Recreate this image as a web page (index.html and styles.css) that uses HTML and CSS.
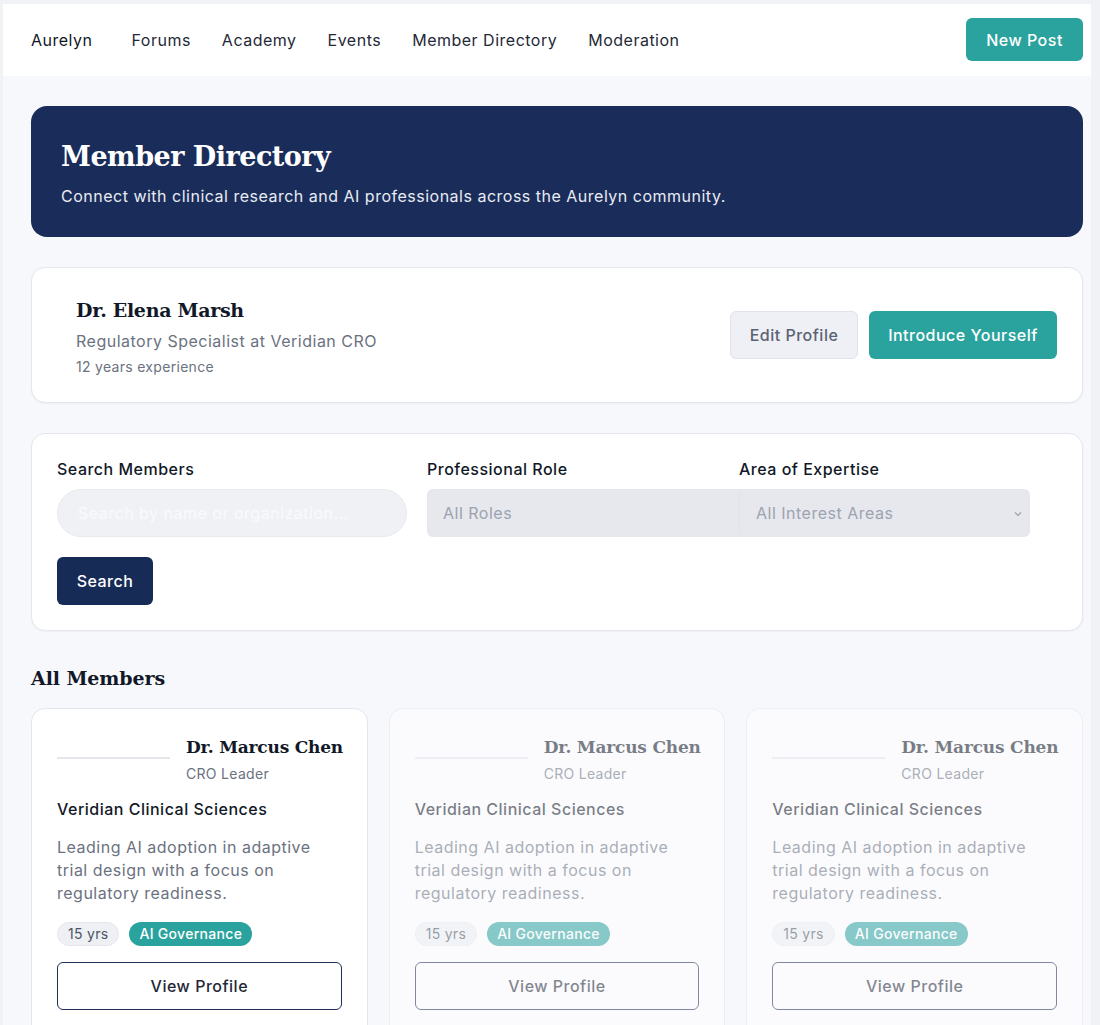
FILE: index.html
```html
<!DOCTYPE html>
<html lang="en">
<head>
<meta charset="utf-8">
<title>Member Directory – Aurelyn</title>
<link rel="stylesheet" href="styles.css">
</head>
<body>
<div class="page">
  <header class="topbar">
    <nav class="nav">
      <a class="brand" href="#">Aurelyn</a>
      <a href="#">Forums</a>
      <a href="#">Academy</a>
      <a href="#">Events</a>
      <a href="#">Member Directory</a>
      <a href="#">Moderation</a>
    </nav>
    <button class="btn btn-teal btn-new">New Post</button>
  </header>

  <main class="content">
    <section class="hero">
      <h1>Member Directory</h1>
      <p>Connect with clinical research and AI professionals across the Aurelyn community.</p>
    </section>

    <section class="card me">
      <div class="me-info">
        <h2>Dr. Elena Marsh</h2>
        <p class="me-role">Regulatory Specialist at Veridian CRO</p>
        <p class="me-exp">12 years experience</p>
      </div>
      <div class="me-actions">
        <button class="btn btn-light">Edit Profile</button>
        <button class="btn btn-teal">Introduce Yourself</button>
      </div>
    </section>

    <section class="card filters">
      <div class="filter-row">
        <label class="field f-search">
          <span>Search Members</span>
          <input type="text" placeholder="Search by name or organization...">
        </label>
        <label class="field f-role">
          <span>Professional Role</span>
          <div class="select select-role">All Roles</div>
        </label>
        <label class="field f-area">
          <span>Area of Expertise</span>
          <div class="select select-area">All Interest Areas
            <svg class="chev" width="8" height="6" viewBox="0 0 8 6"><path d="M1 1.5 L4 4.5 L7 1.5" fill="none" stroke="#9aa0ab" stroke-width="1.2"/></svg>
          </div>
        </label>
      </div>
      <button class="btn btn-navy">Search</button>
    </section>

    <h2 class="section-title">All Members</h2>

    <div class="grid">
      <article class="member">
        <div class="m-head">
          <div class="avatar"></div>
          <div class="m-name">
            <h3>Dr. Marcus Chen</h3>
            <p>CRO Leader</p>
          </div>
        </div>
        <p class="m-org">Veridian Clinical Sciences</p>
        <p class="m-bio">Leading AI adoption in adaptive trial design with a focus on regulatory readiness.</p>
        <div class="tags"><span class="tag tag-grey">15 yrs</span><span class="tag tag-teal">AI Governance</span></div>
        <button class="btn btn-outline">View Profile</button>
      </article>
      <article class="member faded">
        <div class="m-head">
          <div class="avatar"></div>
          <div class="m-name">
            <h3>Dr. Marcus Chen</h3>
            <p>CRO Leader</p>
          </div>
        </div>
        <p class="m-org">Veridian Clinical Sciences</p>
        <p class="m-bio">Leading AI adoption in adaptive trial design with a focus on regulatory readiness.</p>
        <div class="tags"><span class="tag tag-grey">15 yrs</span><span class="tag tag-teal">AI Governance</span></div>
        <button class="btn btn-outline">View Profile</button>
      </article>
      <article class="member faded">
        <div class="m-head">
          <div class="avatar"></div>
          <div class="m-name">
            <h3>Dr. Marcus Chen</h3>
            <p>CRO Leader</p>
          </div>
        </div>
        <p class="m-org">Veridian Clinical Sciences</p>
        <p class="m-bio">Leading AI adoption in adaptive trial design with a focus on regulatory readiness.</p>
        <div class="tags"><span class="tag tag-grey">15 yrs</span><span class="tag tag-teal">AI Governance</span></div>
        <button class="btn btn-outline">View Profile</button>
      </article>
    </div>
  </main>
</div>
</body>
</html>
```

FILE: styles.css
```css
* { box-sizing: border-box; }
html { background: #f1f2f5; }
body {
  margin: 0;
  font-family: Inter, "Noto Sans", sans-serif;
  letter-spacing: 0.5px;
  color: #111827;
  overflow: hidden;
}
.page {
  width: 1088px;
  margin: 4px 0 0 3px;
  background: #f7f8fc;
  min-height: 1021px;
}
.topbar {
  height: 72px;
  background: #ffffff;
  display: flex;
  align-items: center;
  justify-content: space-between;
  padding: 0 8px 0 28px;
}
.nav { display: flex; align-items: center; gap: 31px; }
.nav a {
  color: #1f2937;
  text-decoration: none;
  font-size: 16px;
}
.nav .brand { margin-right: 8px; color: #111827; }
.btn {
  font-family: Inter, "Noto Sans", sans-serif;
  font-size: 16px;
  font-weight: 500;
  letter-spacing: 0.5px;
  border-radius: 6px;
  border: none;
  cursor: pointer;
}
.btn-teal { background: #2aa39e; color: #fff; }
.btn-new { height: 43px; width: 117px; margin-top: -1px; }
.content {
  width: 1052px;
  margin-left: 28px;
  padding: 30px 0 0;
}
.hero {
  background: #1a2d5a;
  border-radius: 16px;
  height: 131px;
  padding: 34px 30px 0;
  color: #fff;
}
.hero h1 {
  margin: 0;
  font-family: "DejaVu Serif", "Liberation Serif", serif;
  font-size: 27px;
  font-weight: 700;
  letter-spacing: -0.5px;
  line-height: 34px;
}
.hero p { margin: 12px 0 0; font-size: 16px; color: #e8ebf3; }
.card {
  background: #fff;
  border: 1px solid #e3e6ec;
  border-radius: 14px;
  box-shadow: 0 1px 2px rgba(0,0,0,0.04);
}
.me {
  margin-top: 30px;
  height: 136px;
  display: flex;
  align-items: center;
  justify-content: space-between;
  padding: 2px 25px 0 44px;
}
.me h2 {
  margin: 0;
  font-family: "DejaVu Serif", "Liberation Serif", serif;
  font-size: 19px;
  font-weight: 700;
  letter-spacing: -0.3px;
  line-height: 26px;
  color: #111827;
}
.me-role { margin: 8px 0 0; font-size: 16px; color: #6b7280; }
.me-exp { margin: 7px 0 0; font-size: 14px; letter-spacing: 0.3px; color: #6b7280; }
.me-actions { display: flex; gap: 11px; margin-top: -2px; }
.me-actions .btn { height: 48px; padding: 0; }
.btn-light { background: #eef0f5; color: #5b6271; border: 1px solid #dfe2e8; width: 128px; }
.me-actions .btn-teal { width: 188px; }
.filters {
  margin-top: 30px;
  height: 198px;
  padding: 25px 25px 0;
}
.filter-row { display: flex; }
.field { display: flex; flex-direction: column; }
.field span { font-size: 16px; font-weight: 500; color: #111827; line-height: 20px; margin-bottom: 10px; }
.f-search { width: 370px; }
.f-role { width: 312px; }
.f-area { width: 291px; }
.f-search input {
  width: 350px;
  height: 48px;
  border-radius: 24px;
  border: 1px solid #e8eaef;
  background: #f0f1f5;
  padding: 0 20px;
  font-family: Inter, "Noto Sans", sans-serif;
  font-size: 16px;
  letter-spacing: 0.5px;
  outline: none;
}
.f-search input::placeholder { color: #fafafc; }
.select {
  height: 48px;
  background: #e6e8ee;
  color: #9ca3af;
  font-size: 16px;
  display: flex;
  align-items: center;
  padding: 0 16px;
  border-radius: 6px;
}
.select-role { width: 340px; border-radius: 6px 0 0 6px; }
.select-area {
  width: 291px;
  justify-content: space-between;
  border-left: 1px solid #e1e3e9;
  position: relative;
  z-index: 1;
  padding-right: 8px;
}
.chev { margin-top: 2px; }
.btn-navy { background: #172b57; color: #fff; height: 48px; width: 96px; margin-top: 20px; }
.section-title {
  margin: 33px 0 0;
  font-family: "DejaVu Serif", "Liberation Serif", serif;
  font-size: 19px;
  font-weight: 700;
  letter-spacing: -0.1px;
  line-height: 28px;
  color: #111827;
}
.grid {
  margin-top: 16px;
  display: grid;
  grid-template-columns: repeat(3, minmax(0, 1fr));
  gap: 21px;
}
.member {
  background: #fff;
  border: 1px solid #e3e6ec;
  border-radius: 14px;
  padding: 26px 25px 30px;
  height: 340px;
  min-width: 0;
}
.faded { opacity: 0.55; }
.m-head { display: flex; gap: 16px; align-items: flex-start; }
.avatar { width: 113px; height: 24px; border-bottom: 2px solid #e4e6ec; flex: none; }
.m-name { min-width: 0; }
.m-name h3 {
  margin: 0;
  font-family: "DejaVu Serif", "Liberation Serif", serif;
  font-size: 17px;
  font-weight: 700;
  letter-spacing: -0.2px;
  line-height: 24px;
  color: #111827;
  white-space: nowrap;
}
.m-name p { margin: 6px 0 0; font-size: 14px; letter-spacing: 0.3px; color: #6b7280; }
.m-org { margin: 17px 0 0; font-size: 16px; font-weight: 500; color: #111827; }
.m-bio { margin: 17px 0 0; font-size: 16px; line-height: 23px; color: #6b7280; }
.tags { display: flex; gap: 10px; margin-top: 17px; }
.tag { font-size: 14px; letter-spacing: 0.3px; height: 24px; line-height: 24px; padding: 0 10px; border-radius: 12px; }
.tag-grey { background: #eef0f4; color: #4b5563; border: 1px solid #e6e8ed; line-height: 22px; }
.tag-teal { background: #2aa39e; color: #fff; font-weight: 500; }
.btn-outline {
  margin-top: 16px;
  width: 100%;
  height: 48px;
  background: #fff;
  border: 1.5px solid #1f2e55;
  color: #1f2937;
}
```
